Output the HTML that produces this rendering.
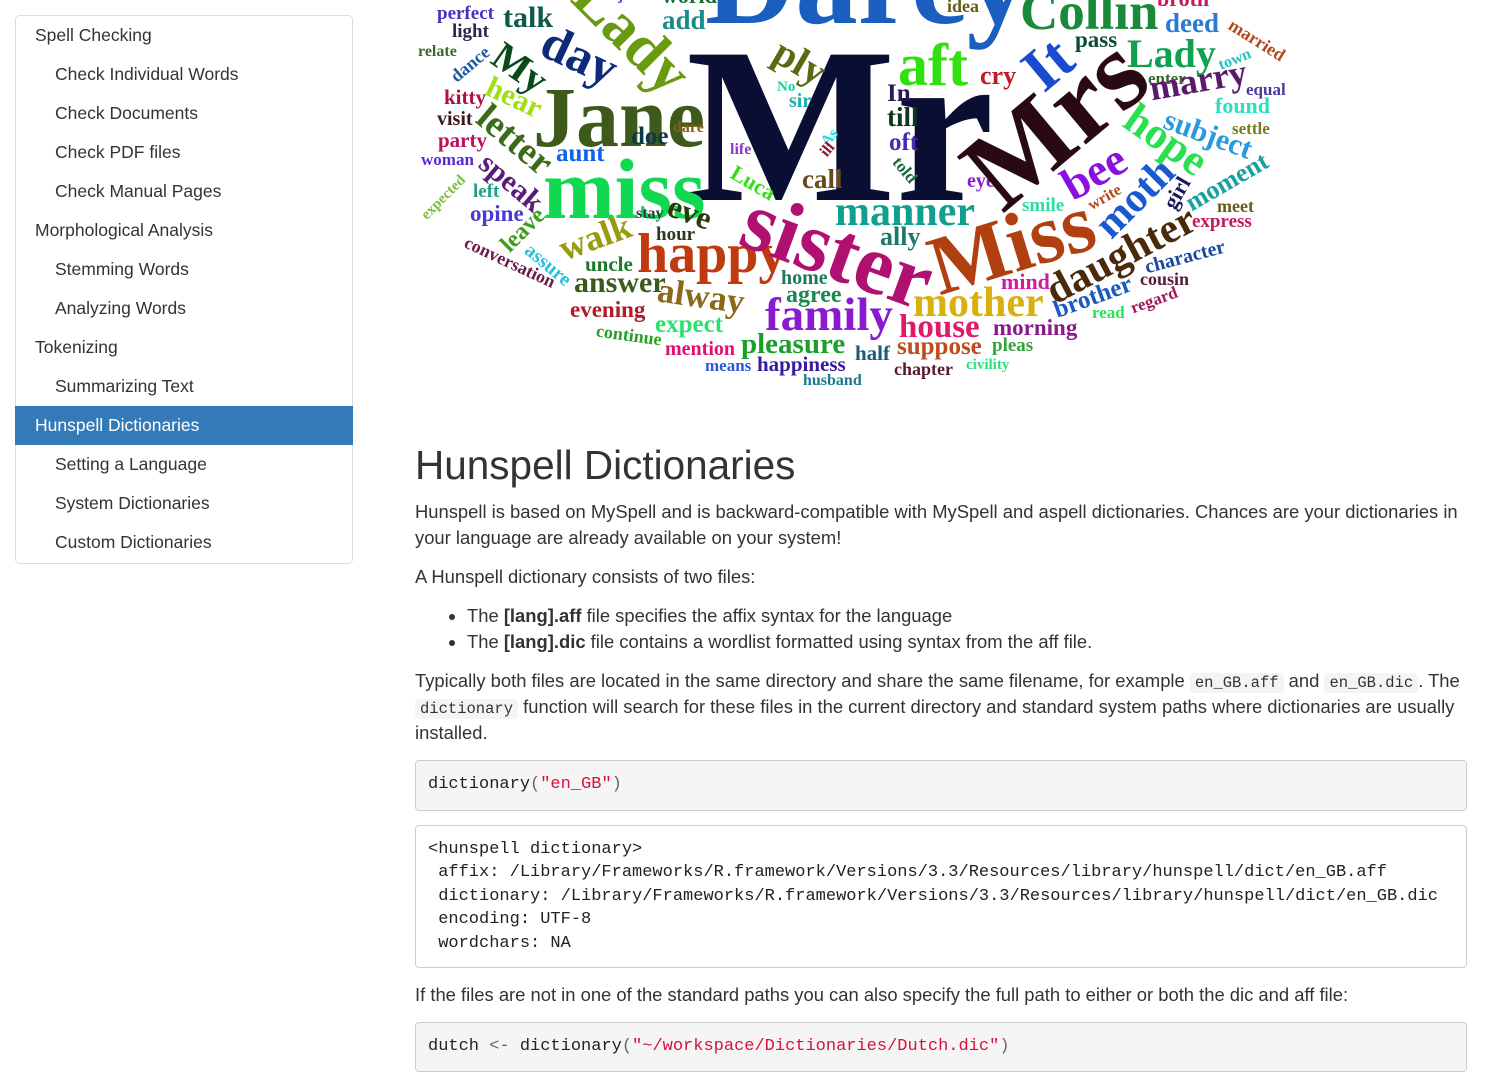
<!DOCTYPE html>
<html><head><meta charset="utf-8"><style>
body{margin:0;width:1500px;height:1054px;overflow:hidden;background:#fff;font-family:"Liberation Sans",Helvetica,Arial,sans-serif;color:#333;position:relative}
.side{position:absolute;left:15px;top:15px;width:336px;height:547px;border:1px solid #ddd;border-radius:5px}
.side div{height:39px;line-height:39px;font-size:17.5px;padding-left:19px;color:#333}
.side div.s{padding-left:39px}
.side div.a{background:#337ab7;color:#fff;margin:0 -1px;padding-left:20px}
.cloud{position:absolute;left:0;top:0;width:1500px;height:400px;overflow:hidden}
.w{position:absolute;font-family:"Liberation Serif",serif;font-weight:bold;line-height:1;white-space:nowrap;transform-origin:0 0.84em}
.r{position:absolute;font-family:"Liberation Serif",serif;font-weight:bold;line-height:1;white-space:nowrap}
.main{position:absolute;left:415px;top:440px;width:1052px}
h1{font-weight:normal;font-size:40.5px;line-height:50px;margin:0;color:#333}
p{margin:0;font-size:18.4px;line-height:26px}
ul{margin:13px 0 0;padding-left:52px;font-size:18.4px;line-height:26px}
code{font-family:"Liberation Mono",monospace;font-size:15.5px;background:#f4f4f4;border-radius:4px;padding:1px 5px;line-height:1}
pre{margin:0;font-family:"Liberation Mono",monospace;font-size:17px;border:1px solid #ccc;border-radius:4px;padding:12px 12px;background:#f5f5f5;line-height:23.5px;color:#222}
.str{color:#d9113a}.pu{color:#666}
</style></head><body>
<div class="side">
<div>Spell Checking</div><div class="s">Check Individual Words</div><div class="s">Check Documents</div><div class="s">Check PDF files</div><div class="s">Check Manual Pages</div><div>Morphological Analysis</div><div class="s">Stemming Words</div><div class="s">Analyzing Words</div><div>Tokenizing</div><div class="s">Summarizing Text</div><div class="a">Hunspell Dictionaries</div><div class="s">Setting a Language</div><div class="s">System Dictionaries</div><div class="s">Custom Dictionaries</div>
</div>

<div class="cloud">
<span class="w" style="left:705px;top:-80px;font-size:125px;color:#1a5fc0">Darcy</span>
<span class="w" style="left:686px;top:15px;font-size:222px;color:#0a0e33">Mr</span>
<span class="w" style="left:437px;top:4px;font-size:19px;color:#4a2fc4">perfect</span>
<span class="w" style="left:452px;top:22px;font-size:19px;color:#2a2a4a">light</span>
<span class="w" style="left:503px;top:3px;font-size:30px;color:#0f5a4a">talk</span>
<span class="w" style="left:418px;top:44px;font-size:16px;color:#3a6a2a">relate</span>
<span class="w" style="left:662px;top:7px;font-size:27px;color:#1a8a8a">add</span>
<span class="w" style="left:662px;top:-15px;font-size:22px;color:#1a6a3a">world</span>
<span class="w" style="left:618px;top:-11px;font-size:15px;color:#5a3ac0">join</span>
<span class="w" style="left:444px;top:87px;font-size:21px;color:#b01040">kitty</span>
<span class="w" style="left:437px;top:109px;font-size:20px;color:#3a1a1a">visit</span>
<span class="w" style="left:438px;top:130px;font-size:21px;color:#c0105a">party</span>
<span class="w" style="left:421px;top:151px;font-size:17px;color:#5a2ad0">woman</span>
<span class="w" style="left:473px;top:182px;font-size:19px;color:#1aa08a">left</span>
<span class="w" style="left:470px;top:202px;font-size:23px;color:#4a3ad0">opine</span>
<span class="w" style="left:533px;top:74px;font-size:86px;color:#3e5a1a">Jane</span>
<span class="w" style="left:543px;top:146px;font-size:86px;color:#10d850">miss</span>
<span class="w" style="left:556px;top:141px;font-size:25px;color:#1060f0">aunt</span>
<span class="w" style="left:631px;top:124px;font-size:25px;color:#0a3a4a">doe</span>
<span class="w" style="left:673px;top:120px;font-size:16px;color:#8a5a1a">dare</span>
<span class="w" style="left:730px;top:142px;font-size:16px;color:#8a3ac0">life</span>
<span class="w" style="left:777px;top:80px;font-size:15px;color:#1ad0a0">No</span>
<span class="w" style="left:789px;top:91px;font-size:20px;color:#1ab0b0">sir</span>
<span class="w" style="left:802px;top:166px;font-size:27px;color:#6a4a1a">call</span>
<span class="w" style="left:636px;top:206px;font-size:16px;color:#2a3a4a">stay</span>
<span class="w" style="left:656px;top:225px;font-size:19px;color:#2a3a1a">hour</span>
<span class="w" style="left:585px;top:254px;font-size:21px;color:#1a7a2a">uncle</span>
<span class="w" style="left:574px;top:268px;font-size:30px;color:#3a5a1a">answer</span>
<span class="w" style="left:637px;top:226px;font-size:56px;color:#c03a10">happy</span>
<span class="w" style="left:570px;top:298px;font-size:23px;color:#b01a2a">evening</span>
<span class="w" style="left:655px;top:312px;font-size:25px;color:#2ae070">expect</span>
<span class="w" style="left:665px;top:339px;font-size:20px;color:#e01070">mention</span>
<span class="w" style="left:741px;top:330px;font-size:29px;color:#1aa02a">pleasure</span>
<span class="w" style="left:705px;top:357px;font-size:17px;color:#2a5ae0">means</span>
<span class="w" style="left:757px;top:354px;font-size:21px;color:#3a1aa0">happiness</span>
<span class="w" style="left:803px;top:373px;font-size:16px;color:#1a7a8a">husband</span>
<span class="w" style="left:781px;top:268px;font-size:20px;color:#1a7a5a">home</span>
<span class="w" style="left:786px;top:283px;font-size:24px;color:#1a8a4a">agree</span>
<span class="w" style="left:765px;top:292px;font-size:47px;color:#8a1ad0">family</span>
<span class="w" style="left:855px;top:343px;font-size:21px;color:#1a5a7a">half</span>
<span class="w" style="left:894px;top:360px;font-size:18px;color:#5a1a2a">chapter</span>
<span class="w" style="left:966px;top:358px;font-size:15px;color:#2ae07a">civility</span>
<span class="w" style="left:897px;top:334px;font-size:25px;color:#c04a1a">suppose</span>
<span class="w" style="left:992px;top:336px;font-size:19px;color:#3aa03a">pleas</span>
<span class="w" style="left:899px;top:311px;font-size:33px;color:#e01a6a">house</span>
<span class="w" style="left:993px;top:316px;font-size:23px;color:#8a1a8a">morning</span>
<span class="w" style="left:913px;top:282px;font-size:42px;color:#d8b010">mother</span>
<span class="w" style="left:1001px;top:271px;font-size:22px;color:#d01aa0">mind</span>
<span class="w" style="left:835px;top:191px;font-size:42px;color:#10a090">manner</span>
<span class="w" style="left:880px;top:224px;font-size:26px;color:#1a7a6a">ally</span>
<span class="w" style="left:967px;top:171px;font-size:20px;color:#8a1ad0">eye</span>
<span class="w" style="left:887px;top:81px;font-size:25px;color:#2a1a5a">In</span>
<span class="w" style="left:887px;top:104px;font-size:27px;color:#0a3a1a">till</span>
<span class="w" style="left:889px;top:130px;font-size:25px;color:#4a2ab0">oft</span>
<span class="w" style="left:898px;top:35px;font-size:60px;color:#30e010">aft</span>
<span class="w" style="left:980px;top:63px;font-size:26px;color:#c01a2a">cry</span>
<span class="w" style="left:947px;top:-3px;font-size:18px;color:#6a5a1a">idea</span>
<span class="w" style="left:1020px;top:-14px;font-size:53px;color:#1a8a3a">Collin</span>
<span class="w" style="left:1157px;top:-12px;font-size:22px;color:#c01a5a">broth</span>
<span class="w" style="left:1165px;top:10px;font-size:27px;color:#2a7ad0">deed</span>
<span class="w" style="left:1075px;top:28px;font-size:23px;color:#0a4a3a">pass</span>
<span class="w" style="left:1127px;top:34px;font-size:40px;color:#10a050">Lady</span>
<span class="w" style="left:1148px;top:70px;font-size:17px;color:#3a6a2a">enter</span>
<span class="w" style="left:1246px;top:81px;font-size:17px;color:#4a3aa0">equal</span>
<span class="w" style="left:1215px;top:95px;font-size:22px;color:#2ae0c0">found</span>
<span class="w" style="left:1232px;top:120px;font-size:17px;color:#7a7a1a">settle</span>
<span class="w" style="left:1217px;top:197px;font-size:18px;color:#6a5a1a">meet</span>
<span class="w" style="left:1192px;top:212px;font-size:19px;color:#c01a5a">express</span>
<span class="w" style="left:1140px;top:270px;font-size:18px;color:#5a1a3a">cousin</span>
<span class="w" style="left:1092px;top:304px;font-size:17px;color:#2ae05a">read</span>
<span class="w" style="left:1022px;top:196px;font-size:19px;color:#2ae0a0">smile</span>

<span class="r" style="left:632px;top:35px;font-size:62px;color:#6a9a10;transform:translate(-50%,-50%) rotate(45deg)">Lady</span>
<span class="r" style="left:580px;top:55px;font-size:50px;color:#102a7a;transform:translate(-50%,-50%) rotate(25deg)">day</span>
<span class="r" style="left:520px;top:68px;font-size:40px;color:#0a4a1a;transform:translate(-50%,-50%) rotate(35deg)">My</span>
<span class="r" style="left:470px;top:64px;font-size:18px;color:#1a5aa0;transform:translate(-50%,-50%) rotate(-40deg)">dance</span>
<span class="r" style="left:514px;top:98px;font-size:30px;color:#a0e010;transform:translate(-50%,-50%) rotate(25deg)">hear</span>
<span class="r" style="left:515px;top:140px;font-size:38px;color:#3a6a1a;transform:translate(-50%,-50%) rotate(40deg)">letter</span>
<span class="r" style="left:511px;top:183px;font-size:30px;color:#5a1a7a;transform:translate(-50%,-50%) rotate(40deg)">speak</span>
<span class="r" style="left:444px;top:198px;font-size:15px;color:#7ac03a;transform:translate(-50%,-50%) rotate(-45deg)">expected</span>
<span class="r" style="left:523px;top:230px;font-size:24px;color:#3aa01a;transform:translate(-50%,-50%) rotate(-45deg)">leave</span>
<span class="r" style="left:510px;top:262px;font-size:18px;color:#6a1a4a;transform:translate(-50%,-50%) rotate(25deg)">conversation</span>
<span class="r" style="left:548px;top:265px;font-size:20px;color:#2ac0e0;transform:translate(-50%,-50%) rotate(40deg)">assure</span>
<span class="r" style="left:595px;top:237px;font-size:36px;color:#9a9a10;transform:translate(-50%,-50%) rotate(-20deg)">walk</span>
<span class="r" style="left:690px;top:212px;font-size:32px;color:#2a3a0a;transform:translate(-50%,-50%) rotate(20deg)">eve</span>
<span class="r" style="left:701px;top:296px;font-size:35px;color:#8a6a1a;transform:translate(-50%,-50%) rotate(8deg)">alway</span>
<span class="r" style="left:629px;top:335px;font-size:18px;color:#2aa02a;transform:translate(-50%,-50%) rotate(8deg)">continue</span>
<span class="r" style="left:800px;top:62px;font-size:40px;color:#5a6a10;transform:translate(-50%,-50%) rotate(30deg)">ply</span>
<span class="r" style="left:830px;top:138px;font-size:16px;color:#1ae0e0;transform:translate(-50%,-50%) rotate(-50deg)">As</span>
<span class="r" style="left:828px;top:150px;font-size:16px;color:#8a1a2a;transform:translate(-50%,-50%) rotate(-50deg)">ill</span>
<span class="r" style="left:753px;top:183px;font-size:22px;color:#30e010;transform:translate(-50%,-50%) rotate(30deg)">Luca</span>
<span class="r" style="left:905px;top:170px;font-size:17px;color:#1a6a3a;transform:translate(-50%,-50%) rotate(50deg)">told</span>
<span class="r" style="left:838px;top:250px;font-size:86px;color:#b01070;transform:translate(-50%,-50%) rotate(20deg)">sister</span>
<span class="r" style="left:1012px;top:245px;font-size:84px;color:#b04010;transform:translate(-50%,-50%) rotate(-17deg)">Miss</span>
<span class="r" style="left:1055px;top:122px;font-size:112px;color:#2a0a12;transform:translate(-50%,-50%) rotate(-40deg)">Mrs</span>
<span class="r" style="left:1048px;top:64px;font-size:62px;color:#1a4ad0;transform:translate(-50%,-50%) rotate(-40deg)">It</span>
<span class="r" style="left:1198px;top:80px;font-size:36px;color:#5a1a6a;transform:translate(-50%,-50%) rotate(-10deg)">marry</span>
<span class="r" style="left:1235px;top:60px;font-size:16px;color:#2ac0c0;transform:translate(-50%,-50%) rotate(-22deg)">town</span>
<span class="r" style="left:1257px;top:40px;font-size:18px;color:#b04a1a;transform:translate(-50%,-50%) rotate(32deg)">married</span>
<span class="r" style="left:1208px;top:135px;font-size:30px;color:#2a9ae0;transform:translate(-50%,-50%) rotate(20deg)">subject</span>
<span class="r" style="left:1166px;top:140px;font-size:44px;color:#2ae050;transform:translate(-50%,-50%) rotate(35deg)">hope</span>
<span class="r" style="left:1094px;top:172px;font-size:46px;color:#8a10e0;transform:translate(-50%,-50%) rotate(-30deg)">bee</span>
<span class="r" style="left:1135px;top:198px;font-size:42px;color:#1a5ad0;transform:translate(-50%,-50%) rotate(-45deg)">moth</span>
<span class="r" style="left:1177px;top:193px;font-size:22px;color:#1a1a5a;transform:translate(-50%,-50%) rotate(-60deg)">girl</span>
<span class="r" style="left:1227px;top:182px;font-size:26px;color:#1aa0a0;transform:translate(-50%,-50%) rotate(-30deg)">moment</span>
<span class="r" style="left:1105px;top:198px;font-size:16px;color:#b04a1a;transform:translate(-50%,-50%) rotate(-30deg)">write</span>
<span class="r" style="left:1121px;top:255px;font-size:42px;color:#4a2a0a;transform:translate(-50%,-50%) rotate(-28deg)">daughter</span>
<span class="r" style="left:1185px;top:257px;font-size:20px;color:#1a4aa0;transform:translate(-50%,-50%) rotate(-15deg)">character</span>
<span class="r" style="left:1093px;top:297px;font-size:25px;color:#1a5ac0;transform:translate(-50%,-50%) rotate(-20deg)">brother</span>
<span class="r" style="left:1154px;top:300px;font-size:17px;color:#a01a5a;transform:translate(-50%,-50%) rotate(-20deg)">regard</span>
</div>

<div class="main">
<h1>Hunspell Dictionaries</h1>
<p style="margin-top:9px">Hunspell is based on MySpell and is backward-compatible with MySpell and aspell dictionaries. Chances are your dictionaries in your language are already available on your system!</p>
<p style="margin-top:13px">A Hunspell dictionary consists of two files:</p>
<ul><li>The <b>[lang].aff</b> file specifies the affix syntax for the language</li><li>The <b>[lang].dic</b> file contains a wordlist formatted using syntax from the aff file.</li></ul>
<p style="margin-top:13px">Typically both files are located in the same directory and share the same filename, for example <code>en_GB.aff</code> and <code>en_GB.dic</code>. The <code>dictionary</code> function will search for these files in the current directory and standard system paths where dictionaries are usually installed.</p>
<pre style="margin-top:14px;padding:12px 12px 13px">dictionary<span class="pu">(</span><span class="str">"en_GB"</span><span class="pu">)</span></pre>
<pre style="margin-top:14px;background:#fff;padding:12px 12px 12px">&lt;hunspell dictionary&gt;
 affix: /Library/Frameworks/R.framework/Versions/3.3/Resources/library/hunspell/dict/en_GB.aff
 dictionary: /Library/Frameworks/R.framework/Versions/3.3/Resources/library/hunspell/dict/en_GB.dic
 encoding: UTF-8
 wordchars: NA</pre>
<p style="margin-top:14px">If the files are not in one of the standard paths you can also specify the full path to either or both the dic and aff file:</p>
<pre style="margin-top:14px">dutch <span class="pu">&lt;-</span> dictionary<span class="pu">(</span><span class="str">"~/workspace/Dictionaries/Dutch.dic"</span><span class="pu">)</span></pre>
</div>
</body></html>
